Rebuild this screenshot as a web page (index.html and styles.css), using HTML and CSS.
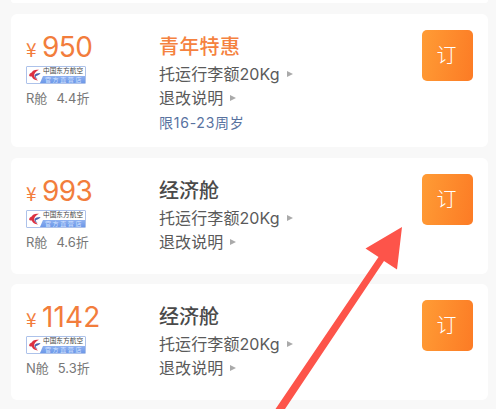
FILE: index.html
```
<!DOCTYPE html>
<html lang="zh-CN">

<head>
    <meta charset="UTF-8">
    <meta name="viewport" content="width=device-width, initial-scale=1.0">
    <title>航班舱位</title>
    <link rel="stylesheet" href="styles.css">
</head>

<body>

    <!-- airline emblem shared by all fares -->
    <svg width="0" height="0" class="defs">
        <symbol id="emblem" viewBox="0 0 12 12">
            <path d="M10 .8C6 .2 3.400 1.500 3 3.300 1 4 0 5.500 .2 7 1.500 7.500 2.300 7.600 2.800 7.500 3.500 9.600 5.500 11.200 9 11.400 6.600 9.800 5.300 8.300 5.200 6.600 5 4.600 6.800 2.200 10 .8Z" fill="#dc3040" />
            <path d="M5.600 6.200C6.200 4.800 8.500 4 11.600 4 10.500 6 8.500 6.600 6.700 7.100 6.800 8.300 7.600 9.300 8.600 10 6.500 9.300 5.300 8 5.600 6.200Z" fill="#4a61a8" />
        </symbol>
    </svg>

    <div class="card previous"></div>

    <div class="card youth">
        <div class="fare">
            <div class="price"><span class="yen">¥</span>950</div>
            <div class="airline">
                <svg class="emblem"><use href="#emblem" /></svg>
                <div class="airline-text">
                    <div class="airline-name">中国东方航空</div>
                    <div class="airline-shop">官方直营店</div>
                </div>
            </div>
            <div class="cabin"><span>R舱</span><span>4.4折</span></div>
        </div>
        <div class="details">
            <h2 class="special">青年特惠</h2>
            <div class="rule">托运行李额20Kg<i class="arrow"></i></div>
            <div class="rule">退改说明<i class="arrow"></i></div>
            <div class="limit">限16-23周岁</div>
        </div>
        <button>订</button>
    </div>

    <div class="card">
        <div class="fare">
            <div class="price"><span class="yen">¥</span>993</div>
            <div class="airline">
                <svg class="emblem"><use href="#emblem" /></svg>
                <div class="airline-text">
                    <div class="airline-name">中国东方航空</div>
                    <div class="airline-shop">官方直营店</div>
                </div>
            </div>
            <div class="cabin"><span>R舱</span><span>4.6折</span></div>
        </div>
        <div class="details">
            <h2>经济舱</h2>
            <div class="rule">托运行李额20Kg<i class="arrow"></i></div>
            <div class="rule">退改说明<i class="arrow"></i></div>
        </div>
        <button>订</button>
    </div>

    <div class="card">
        <div class="fare">
            <div class="price wide"><span class="yen">¥</span>1142</div>
            <div class="airline">
                <svg class="emblem"><use href="#emblem" /></svg>
                <div class="airline-text">
                    <div class="airline-name">中国东方航空</div>
                    <div class="airline-shop">官方直营店</div>
                </div>
            </div>
            <div class="cabin"><span>N舱</span><span>5.3折</span></div>
        </div>
        <div class="details">
            <h2>经济舱</h2>
            <div class="rule">托运行李额20Kg<i class="arrow"></i></div>
            <div class="rule">退改说明<i class="arrow"></i></div>
        </div>
        <button>订</button>
    </div>

    <!-- red pointer over the list -->
    <svg class="pointer" viewBox="0 0 496 409">
        <path d="M402 227L397 269.500 384 261 285 409H275.500L378.500 257 365.500 248.500Z" fill="#fd544a" />
    </svg>

</body>

</html>
```

FILE: styles.css
```
body {
    font-family: Inter, "Noto Sans CJK SC", sans-serif;
    background-color: #f8f8f8;
    color: #5a5a5a;
    margin: 0;
    padding: 0 8px 0 11px;
    height: 409px;
    box-sizing: border-box;
    overflow: hidden;
    position: relative;
}

.defs {
    display: block;
}

.card {
    display: flex;
    align-items: flex-start;
    box-sizing: border-box;
    height: 116px;
    margin-bottom: 10px;
    padding: 16px 15px 0;
    background-color: #fff;
    border-radius: 6px;
}

.card.previous {
    height: 3px;
    margin-bottom: 11px;
    padding: 0;
    border-radius: 0 0 6px 6px;
}

.card.youth {
    height: 133px;
    margin-bottom: 11px;
}

.fare {
    width: 133px;
}

.price {
    height: 36px;
    line-height: 35px;
    font-size: 28px;
    letter-spacing: -0.6px;
    color: #f27d3c;
    white-space: nowrap;
}

.price.wide {
    letter-spacing: 0.1px;
}

.yen {
    display: inline-block;
    width: 16px;
    font-family: "Noto Sans CJK SC", sans-serif;
    font-size: 19px;
    line-height: 20px;
}

.airline {
    display: flex;
    box-sizing: border-box;
    width: 60px;
    height: 18px;
    border: 1px solid #adc2ea;
    border-radius: 1px;
    overflow: hidden;
}

.emblem {
    flex: none;
    width: 12px;
    height: 12px;
    margin: 2px 0 0 2px;
}

.airline-text {
    flex: 1;
    margin-left: -1px;
}

.airline-name {
    height: 9px;
    padding-left: 3px;
    line-height: 9px;
    font-size: 6.7px;
    color: #444;
    white-space: nowrap;
}

.airline-shop {
    height: 7px;
    padding-left: 5px;
    line-height: 7px;
    font-size: 6px;
    letter-spacing: 1.6px;
    color: #d3e2ff;
    white-space: nowrap;
    background: linear-gradient(#8fb1f0, #6c98e8);
    clip-path: polygon(3px 0, 100% 0, 100% 100%, 0 100%);
}

.cabin {
    display: flex;
    gap: 9px;
    line-height: 28px;
    font-size: 13px;
    color: #777;
}

.details {
    flex: 1;
}

h2 {
    margin: 0;
    height: 31px;
    line-height: 34px;
    font-size: 20px;
    font-weight: 500;
    color: #4a4a4a;
}

h2.special {
    color: #f58240;
    letter-spacing: 0.3px;
}

.rule {
    display: flex;
    align-items: center;
    height: 24px;
    font-size: 16px;
    letter-spacing: 0.1px;
}

.arrow {
    margin: 1px 0 0 7px;
    border-left: 6px solid #aaa;
    border-top: 3.5px solid transparent;
    border-bottom: 3.5px solid transparent;
}

.limit {
    line-height: 28px;
    font-size: 14px;
    letter-spacing: 0.75px;
    color: #58729f;
}

button {
    width: 51px;
    height: 51px;
    padding: 0 2px 2px 0;
    font-family: inherit;
    font-size: 20px;
    font-weight: 300;
    color: #fff;
    background: linear-gradient(100deg, #ff9c35, #fc7b25);
    border: none;
    border-radius: 5px;
    cursor: pointer;
}

.pointer {
    position: absolute;
    left: 0;
    top: 0;
    width: 496px;
    height: 409px;
    pointer-events: none;
}
```
